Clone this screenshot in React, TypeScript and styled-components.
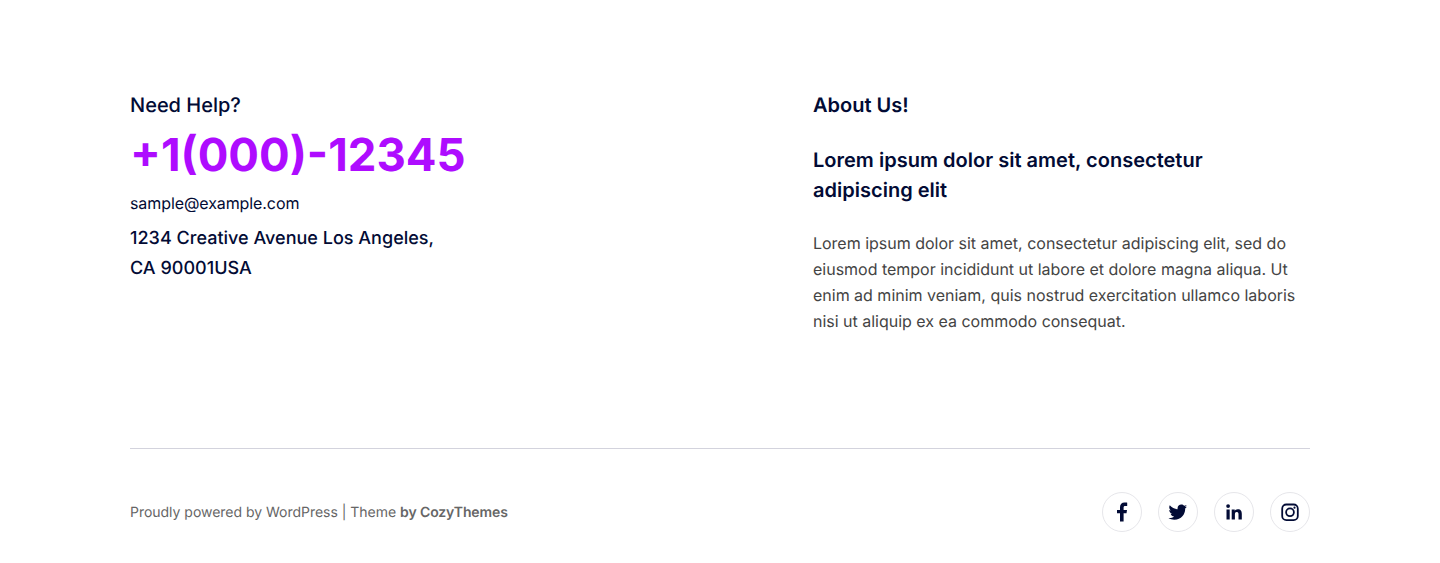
import React from "react";
import styled, { createGlobalStyle } from "styled-components";

const Global = createGlobalStyle`
  *{box-sizing:border-box}
  body{margin:0;background:#fff;font-family:Inter,"Liberation Sans",sans-serif;color:#020b35;text-rendering:geometricPrecision}
  h2,h3,p{margin:0}
`;
const Footer = styled.footer`
  width: 1180px;
  margin: 0 auto;
  padding-top: 90px;
`;
const Top = styled.div`
  display: grid;
  grid-template-columns: 683px 497px;
  height: 358px;
`;
const Column = styled.section`
  display: flex;
  flex-direction: column;
  align-items: flex-start;
`;
const Label = styled.h2<{ $weight: number }>`
  font-size: 20px;
  line-height: 30px;
  font-weight: ${p => p.$weight};
`;
const Phone = styled.p`
  font-size: 45.5px;
  line-height: 60px;
  margin-top: 5px;
  font-weight: 700;
  color: #ae0cff;
`;
const Email = styled.p`
  font-size: 16px;
  line-height: 26px;
  letter-spacing: -0.09px;
  margin-top: 5px;
`;
const Address = styled.p`
  font-size: 18px;
  line-height: 30px;
  font-weight: 500;
  letter-spacing: 0.015px;
  margin-top: 8px;
`;
const Lead = styled.h3`
  font-size: 20px;
  line-height: 30px;
  font-weight: 600;
  letter-spacing: 0.015px;
  margin-top: 25px;
`;
const Body = styled.p`
  font-size: 16px;
  line-height: 26px;
  letter-spacing: -0.01px;
  color: #444;
  margin-top: 25px;
`;
const Bottom = styled.div`
  display: flex;
  justify-content: space-between;
  align-items: center;
  border-top: 1px solid #d3d3dd;
  padding-top: 43px;
`;
const Credit = styled.p`
  font-size: 14px;
  line-height: 24px;
  letter-spacing: -0.02px;
  padding-top: 2px;
  color: #666;
  b { font-weight: 600; letter-spacing: -0.11px; }
`;
const Socials = styled.nav`
  display: flex;
  gap: 16px;
`;
const Social = styled.a`
  width: 40px;
  height: 40px;
  border: 1px solid #e6e6ea;
  border-radius: 50%;
  display: flex;
  align-items: center;
  justify-content: center;
  svg { width: 24px; height: 24px; fill: currentColor; }
`;

const icons = [
  { name: "Facebook", shape: <path d="M10 21.5v-8.3H7v-3.3h3V7.3c0-3 1.8-4.7 4.5-4.7 1.3 0 2.4.1 2.7.1v3.2h-1.9c-1.4 0-1.7.7-1.7 1.7v2.3H17l-.5 3.3h-2.9v8.3z" /> },
  { name: "Twitter", shape: <path transform="translate(.4 .9) scale(.93)" d="M22.23,5.924c-0.736,0.326-1.527,0.547-2.357,0.646c0.847-0.508,1.498-1.312,1.804-2.27c-0.793,0.47-1.671,0.812-2.606,0.996C18.324,4.498,17.257,4,16.077,4c-2.266,0-4.103,1.837-4.103,4.103c0,0.322,0.036,0.635,0.106,0.935C8.67,8.867,5.647,7.234,3.623,4.751C3.27,5.357,3.067,6.062,3.067,6.814c0,1.424,0.724,2.679,1.825,3.415c-0.673-0.021-1.305-0.206-1.859-0.513c0,0.017,0,0.034,0,0.052c0,1.988,1.414,3.647,3.292,4.023c-0.344,0.094-0.707,0.144-1.081,0.144c-0.264,0-0.521-0.026-0.772-0.074c0.522,1.63,2.038,2.816,3.833,2.85c-1.404,1.1-3.174,1.756-5.096,1.756c-0.331,0-0.658-0.019-0.979-0.057c1.816,1.164,3.973,1.843,6.29,1.843c7.547,0,11.675-6.252,11.675-11.675c0-0.178-0.004-0.355-0.012-0.531C20.985,7.47,21.68,6.747,22.23,5.924z" /> },
  { name: "LinkedIn", shape: <path d="M4.5 9.4h3.2v10.2H4.5zM6.1 4.2a1.9 1.9 0 1 1 0 3.8 1.9 1.9 0 0 1 0-3.8zM9.7 9.4h3v1.4c.4-.8 1.5-1.6 3-1.6 3.3 0 4.1 2.1 4.1 4.8v5.6h-3.3v-5c0-1.2 0-2.7-1.7-2.7s-1.9 1.3-1.9 2.6v5.1H9.7z" /> },
  { name: "Instagram", shape: <g fill="none" stroke="currentColor" strokeWidth="1.8"><rect x="4.2" y="4.5" width="15.6" height="15.6" rx="4.2" /><circle cx="12" cy="12.3" r="3.9" /><circle cx="16.5" cy="7.7" r="1.1" fill="currentColor" stroke="none" /></g> },
];

export default function App() {
  return <><Global /><Footer>
    <Top>
      <Column>
        <Label $weight={500}>Need Help?</Label>
        <Phone>+1(000)-12345</Phone>
        <Email>sample@example.com</Email>
        <Address>1234 Creative Avenue Los Angeles,<br />CA 90001USA</Address>
      </Column>
      <Column>
        <Label $weight={600}>About Us!</Label>
        <Lead>Lorem ipsum dolor sit amet, consectetur<br />adipiscing elit</Lead>
        <Body>Lorem ipsum dolor sit amet, consectetur adipiscing elit, sed do eiusmod tempor incididunt ut labore et dolore magna aliqua. Ut enim ad minim veniam, quis nostrud exercitation ullamco laboris nisi ut aliquip ex ea commodo consequat.</Body>
      </Column>
    </Top>
    <Bottom>
      <Credit>Proudly powered by WordPress | Theme <b>by CozyThemes</b></Credit>
      <Socials>{icons.map(i => <Social key={i.name} aria-label={i.name}><svg viewBox="0 0 24 24">{i.shape}</svg></Social>)}</Socials>
    </Bottom>
  </Footer></>;
}
